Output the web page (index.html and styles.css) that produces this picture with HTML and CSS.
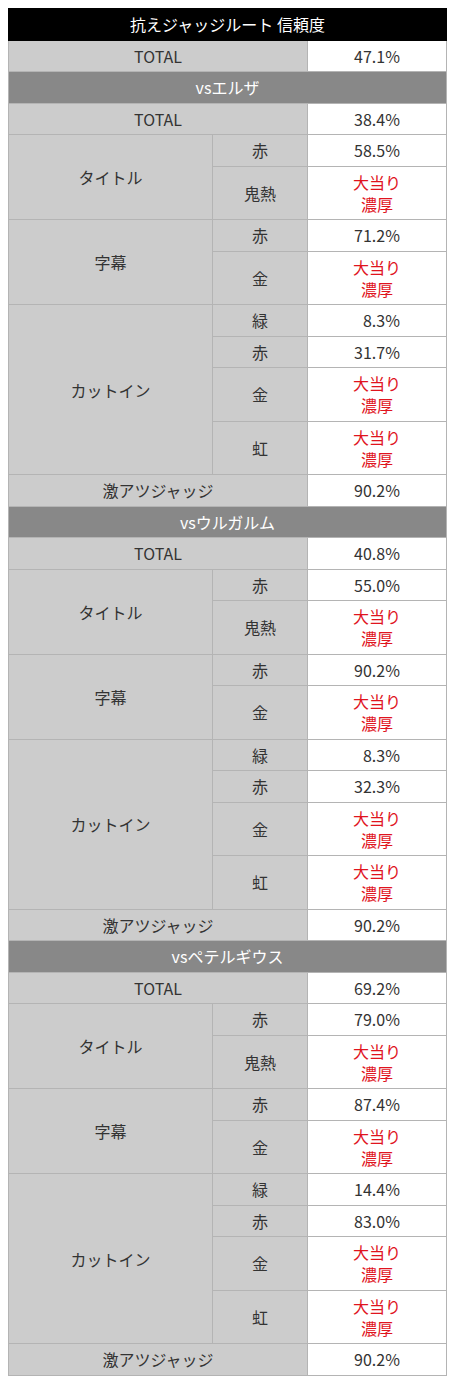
FILE: index.html
```html
<!DOCTYPE html>
<html lang="ja">
<head>
<meta charset="utf-8">
<title>抗えジャッジルート 信頼度</title>
<link rel="stylesheet" href="styles.css">
</head>
<body>
<table class="rt">
  <colgroup><col class="c1"><col class="c2"><col class="c3"></colgroup>
  <tr><th class="title" colspan="3">抗えジャッジルート 信頼度</th></tr>
  <tr><td class="lb" colspan="2">TOTAL</td><td class="val">47.1%</td></tr>

  <tr><th class="sec" colspan="3">vsエルザ</th></tr>
  <tr><td class="lb" colspan="2">TOTAL</td><td class="val">38.4%</td></tr>
  <tr><td class="lb" rowspan="2">タイトル</td><td class="lb">赤</td><td class="val">58.5%</td></tr>
  <tr><td class="lb">鬼熱</td><td class="val hot">大当り<br>濃厚</td></tr>
  <tr><td class="lb" rowspan="2">字幕</td><td class="lb">赤</td><td class="val">71.2%</td></tr>
  <tr><td class="lb">金</td><td class="val hot">大当り<br>濃厚</td></tr>
  <tr><td class="lb" rowspan="4">カットイン</td><td class="lb">緑</td><td class="val">&#8199;8.3%</td></tr>
  <tr><td class="lb">赤</td><td class="val">31.7%</td></tr>
  <tr><td class="lb">金</td><td class="val hot">大当り<br>濃厚</td></tr>
  <tr><td class="lb">虹</td><td class="val hot">大当り<br>濃厚</td></tr>
  <tr><td class="lb" colspan="2">激アツジャッジ</td><td class="val">90.2%</td></tr>

  <tr><th class="sec" colspan="3">vsウルガルム</th></tr>
  <tr><td class="lb" colspan="2">TOTAL</td><td class="val">40.8%</td></tr>
  <tr><td class="lb" rowspan="2">タイトル</td><td class="lb">赤</td><td class="val">55.0%</td></tr>
  <tr><td class="lb">鬼熱</td><td class="val hot">大当り<br>濃厚</td></tr>
  <tr><td class="lb" rowspan="2">字幕</td><td class="lb">赤</td><td class="val">90.2%</td></tr>
  <tr><td class="lb">金</td><td class="val hot">大当り<br>濃厚</td></tr>
  <tr><td class="lb" rowspan="4">カットイン</td><td class="lb">緑</td><td class="val">&#8199;8.3%</td></tr>
  <tr><td class="lb">赤</td><td class="val">32.3%</td></tr>
  <tr><td class="lb">金</td><td class="val hot">大当り<br>濃厚</td></tr>
  <tr><td class="lb">虹</td><td class="val hot">大当り<br>濃厚</td></tr>
  <tr><td class="lb" colspan="2">激アツジャッジ</td><td class="val">90.2%</td></tr>

  <tr><th class="sec" colspan="3">vsペテルギウス</th></tr>
  <tr><td class="lb" colspan="2">TOTAL</td><td class="val">69.2%</td></tr>
  <tr><td class="lb" rowspan="2">タイトル</td><td class="lb">赤</td><td class="val">79.0%</td></tr>
  <tr><td class="lb">鬼熱</td><td class="val hot">大当り<br>濃厚</td></tr>
  <tr><td class="lb" rowspan="2">字幕</td><td class="lb">赤</td><td class="val">87.4%</td></tr>
  <tr><td class="lb">金</td><td class="val hot">大当り<br>濃厚</td></tr>
  <tr><td class="lb" rowspan="4">カットイン</td><td class="lb">緑</td><td class="val">14.4%</td></tr>
  <tr><td class="lb">赤</td><td class="val">83.0%</td></tr>
  <tr><td class="lb">金</td><td class="val hot">大当り<br>濃厚</td></tr>
  <tr><td class="lb">虹</td><td class="val hot">大当り<br>濃厚</td></tr>
  <tr><td class="lb" colspan="2">激アツジャッジ</td><td class="val">90.2%</td></tr>
</table>
</body>
</html>
```
FILE: styles.css
```css
html, body {
  margin: 0;
  padding: 0;
  background: #ffffff;
}
body {
  padding: 8px;
  font-family: "Noto Sans CJK JP", "Noto Sans", sans-serif;
  font-size: 16px;
  color: #333333;
}
.rt {
  width: 438px;
  border-collapse: collapse;
  table-layout: fixed;
}
.c1 { width: 204px; }
.c2 { width: 95px; }
.c3 { width: 139px; }
.rt th,
.rt td {
  border: 1px solid #b4b4b4;
  text-align: center;
  vertical-align: middle;
  line-height: 22px;
  padding: 4.25px 0;
  font-weight: normal;
}
.rt .title {
  background: #000000;
  color: #ffffff;
  border-color: #000000;
}
.rt .sec {
  background: #888888;
  color: #ffffff;
}
.rt .lb {
  background: #cccccc;
}
.rt .val {
  background: #ffffff;
}
.rt .hot {
  color: #e0141e;
}
```
